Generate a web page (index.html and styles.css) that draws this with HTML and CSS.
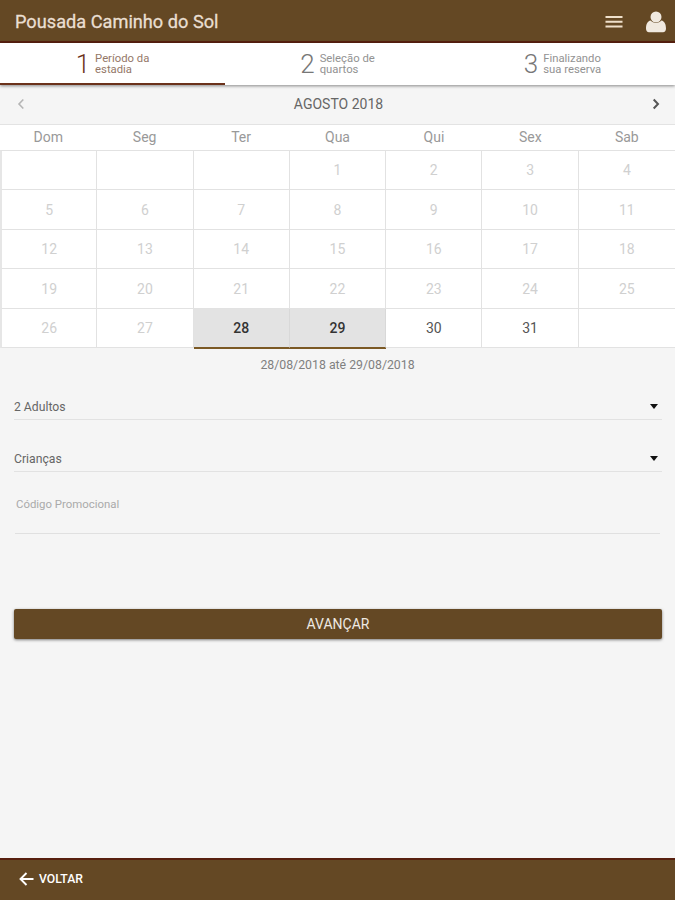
FILE: index.html
```html
<!DOCTYPE html>
<html lang="pt-BR">
<head>
    <meta charset="UTF-8">
    <title>Pousada Caminho do Sol</title>
    <link rel="stylesheet" href="styles.css">
</head>
<body>
    <header class="topbar">
        <h1 class="title">Pousada Caminho do Sol</h1>
        <svg class="icon-menu" width="18" height="12" viewBox="0 0 18 12"><path d="M0.5 1h17M0.5 5.7h17M0.5 10.4h17" stroke="#efe0cb" stroke-width="2"/></svg>
        <svg class="icon-user" width="22" height="22" viewBox="0 0 22 22" fill="#f0e9df"><path d="M5.6 9.6C2.4 10.2 1 13.4 1 17.6 1 20 2.2 21.3 4 21.3H18C19.8 21.3 21 20 21 17.6 21 13.4 19.6 10.2 16.4 9.6 15 11.2 13.1 12 11 12S7 11.2 5.6 9.6z"/><circle cx="11" cy="6" r="5.5"/></svg>
    </header>

    <nav class="steps">
        <div class="step active"><span class="number">1</span><span class="label">Período da<br>estadia</span></div>
        <div class="step"><span class="number">2</span><span class="label">Seleção de<br>quartos</span></div>
        <div class="step"><span class="number">3</span><span class="label">Finalizando<br>sua reserva</span></div>
    </nav>

    <main>
        <div class="month">
            <svg class="prev" width="8" height="12" viewBox="0 0 8 12"><path d="M6.3 1.5L2 6l4.3 4.5"/></svg>
            <span>AGOSTO 2018</span>
            <svg class="next" width="8" height="12" viewBox="0 0 8 12"><path d="M1.7 1.5L6 6l-4.3 4.5"/></svg>
        </div>
        <div class="weekdays">
            <span>Dom</span><span>Seg</span><span>Ter</span><span>Qua</span><span>Qui</span><span>Sex</span><span>Sab</span>
        </div>
        <div class="days">
            <span></span><span></span><span></span><span>1</span><span>2</span><span>3</span><span>4</span>
            <span>5</span><span>6</span><span>7</span><span>8</span><span>9</span><span>10</span><span>11</span>
            <span>12</span><span>13</span><span>14</span><span>15</span><span>16</span><span>17</span><span>18</span>
            <span>19</span><span>20</span><span>21</span><span>22</span><span>23</span><span>24</span><span>25</span>
            <span>26</span><span>27</span><span class="selected">28</span><span class="selected">29</span><span class="free">30</span><span class="free">31</span><span></span>
        </div>
        <p class="period">28/08/2018 até 29/08/2018</p>

        <form class="form">
            <div class="select"><span>2 Adultos</span><i class="caret"></i></div>
            <div class="select"><span>Crianças</span><i class="caret"></i></div>
            <input class="promo" type="text" placeholder="Código Promocional">
            <button class="submit" type="button">AVANÇAR</button>
        </form>
    </main>

    <footer class="footer">
        <svg width="15" height="14" viewBox="0 0 15 14"><path d="M14.5 7H1.8M7.5 1L1.5 7l6 6" fill="none" stroke="#fff" stroke-width="1.9"/></svg>
        <span class="back">VOLTAR</span>
    </footer>
</body>
</html>
```

FILE: styles.css
```css
* {
    box-sizing: border-box;
}
body {
    margin: 0;
    height: 900px;
    display: flex;
    flex-direction: column;
    font-family: Roboto, sans-serif;
    background: #f5f5f5;
    color: #666;
    overflow: hidden;
}
svg {
    display: block;
}
.topbar {
    height: 43px;
    display: flex;
    align-items: center;
    padding: 2px 8px 0 15px;
    background: #644824;
    border-bottom: 2px solid #58200f;
}
.title {
    flex: 1;
    margin: 0;
    font-size: 18.2px;
    font-weight: 400;
    color: #eadfd2;
    -webkit-text-stroke: 0.3px #eadfd2;
}
.icon-menu {
    margin-right: 22px;
}
.steps {
    height: 42px;
    display: flex;
    background: #fff;
    box-shadow: 0 1px 3px rgba(0, 0, 0, 0.45);
    position: relative;
}
.step {
    flex: 1;
    display: flex;
    justify-content: center;
    align-items: center;
    gap: 5px;
    border-bottom: 2px solid transparent;
    color: #929292;
}
.number {
    padding-top: 1px;
    font-size: 26px;
    font-weight: 300;
    color: #777;
}
.label {
    padding-top: 2px;
    font-size: 11.3px;
    line-height: 11.5px;
}
.active {
    border-bottom-color: #6b321b;
    color: #947768;
}
.active .number {
    color: #6b321b;
}
.month {
    height: 40px;
    display: flex;
    align-items: center;
    justify-content: space-between;
    padding: 0 15px 2px 17px;
    border-bottom: 1px solid #e3e3e3;
    font-size: 14px;
}
.month path {
    fill: none;
    stroke: #555;
    stroke-width: 2;
}
.month .prev path {
    stroke: #b5b5b5;
    stroke-width: 1.6;
}
.weekdays, .days {
    display: grid;
    grid-template-columns: repeat(7, 1fr);
    background: #fff;
    text-align: center;
}
.weekdays {
    height: 25px;
    line-height: 25px;
    font-size: 14px;
    color: #999;
}
.days {
    grid-template-rows: 39px 40px 39px 40px 39px;
    border-top: 1px solid #e2e2e2;
    border-left: 1px solid #e6e6e6;
    font-size: 14px;
    color: #d0d0d0;
}
.days span {
    display: flex;
    align-items: center;
    justify-content: center;
    border-right: 1px solid #e2e2e2;
    border-bottom: 1px solid #e2e2e2;
}
.days span:nth-child(7n) {
    border-right: 0;
}
.days span:nth-child(7n + 1) {
    border-left: 1px solid #e6e6e6;
}
.days .free {
    color: #555;
}
.days .selected {
    background: #e3e3e3;
    border-right-color: #d8d8d8;
    border-bottom-color: #7b5925;
    box-shadow: 0 1px #7b5925;
    color: #333;
    font-weight: 500;
}
.period {
    margin: 9px 0 0;
    line-height: 16px;
    font-size: 12.3px;
    text-align: center;
    color: #808080;
}
.form {
    padding: 21px 13px 0 14px;
}
.select {
    height: 26px;
    margin-bottom: 26px;
    display: flex;
    align-items: center;
    justify-content: space-between;
    padding-right: 4px;
    border-bottom: 1px solid #e2e2e2;
    font-size: 12.2px;
}
.caret {
    border: 4px solid transparent;
    border-top: 5px solid #111;
    border-bottom: 0;
}
.promo {
    display: block;
    width: 645px;
    height: 37px;
    margin: -1px 0 75px 1px;
    padding: 0 0 22px 1px;
    border: 0;
    border-bottom: 1px solid #e0e0e0;
    background: none;
    font: 11.4px Roboto, sans-serif;
}
.promo::placeholder {
    color: #aaa;
}
.submit {
    display: block;
    width: 100%;
    height: 30px;
    padding: 0;
    border: 0;
    border-radius: 2px;
    background: #644824;
    box-shadow: 0 1px 3px rgba(0, 0, 0, 0.5);
    color: #eee9e2;
    font: 14px Roboto, sans-serif;
}
.footer {
    height: 42px;
    margin-top: auto;
    display: flex;
    align-items: center;
    gap: 5px;
    padding: 0 0 2px 19px;
    background: #644824;
    border-top: 2px solid #58200f;
}
.back {
    font-size: 12.2px;
    font-weight: 500;
    color: #fff;
}
```
